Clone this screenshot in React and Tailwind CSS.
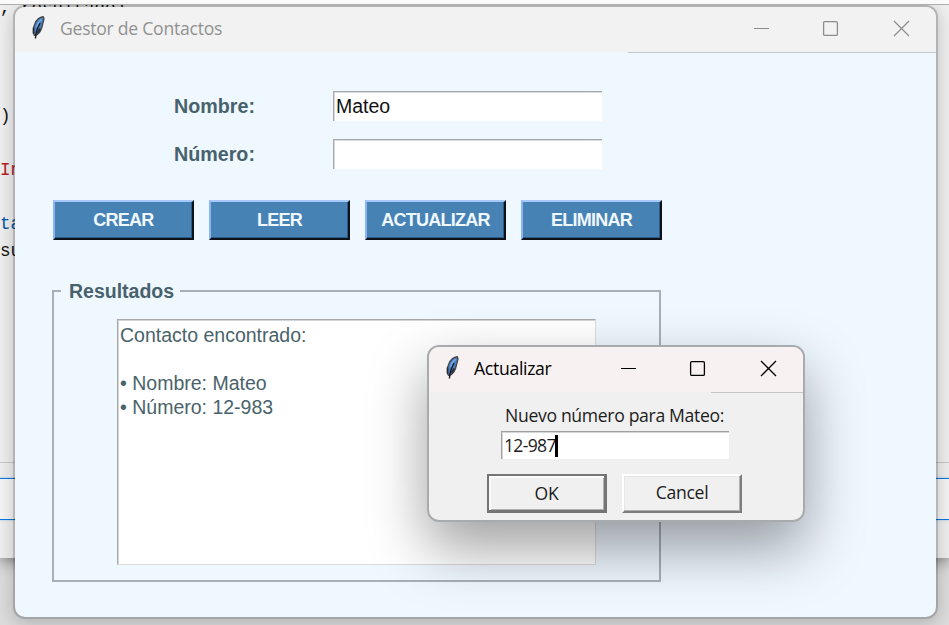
import React from "react";

const UI = "font-['Open_Sans','Noto_Sans',sans-serif]";

function Feather() {
  return (
    <svg width="16" height="26" viewBox="0 0 16 26" className="block shrink-0">
      <path
        d="M13.2 1.8C9.4 2.2 6.4 5.2 4.8 9C3.2 12 2.8 15 3.4 18C4 20 4.6 20.6 5.2 20.6C8 19.5 10.6 16.4 11.6 13C12.4 10.4 12.8 8.4 13.4 6.4C14 4.4 14 2.6 13.2 1.8Z"
        fill="#4a7fc0"
        stroke="#47484c"
        strokeWidth="1.4"
      />
      <path d="M11.6 4.2C8.8 6 7.4 9 6.6 12.4" fill="none" stroke="#6fa8ea" strokeWidth="1.8" />
      <path d="M10.2 8C8.4 11 5.8 16 5.4 23.5" fill="none" stroke="#15171c" strokeWidth="1.4" />
      <path d="M3.6 12.5L3.6 18.5M10.2 13.5L7.4 18" fill="none" stroke="#25292f" strokeWidth="1.5" />
    </svg>
  );
}

function WindowControls({ className }) {
  return (
    <svg
      width="160"
      height="18"
      viewBox="0 0 160 18"
      fill="none"
      stroke="currentColor"
      strokeWidth="1.3"
      className={`-mt-[3px] block shrink-0 ${className}`}
    >
      <path d="M1 9.5H16" strokeWidth="1" />
      <rect x="70.6" y="2.6" width="13.8" height="13.8" rx="1.2" />
      <path d="M141 2L156 17M156 2L141 17" />
    </svg>
  );
}

function Field({ label, value }) {
  return (
    <div className="flex h-[30px] items-center">
      <div className="w-[159px] text-[19.7px] font-bold leading-[30px] text-[#48626c]">{label}</div>
      <div className="h-[30px] w-[269px] border-l border-t border-[#a6a8ab] bg-white pl-[2px] text-[19.5px] leading-[29px] text-[#111] shadow-[inset_1px_1px_0_#d8d9da]">
        {value}
      </div>
    </div>
  );
}

function ActionButton({ children }) {
  return (
    <button className="h-[40px] w-[141px] border-2 border-b-[#0c1218] border-l-[#8ab4f4] border-r-[#0c1218] border-t-[#a6c8fa] bg-[#4682b4] text-[18px] font-bold leading-[35px] tracking-[-0.75px] text-[#f0f8ff] shadow-[inset_-1px_-1px_0_#2c5a82]">
      {children}
    </button>
  );
}

function CodeEditor() {
  return (
    <div className="flex h-[558px] flex-col bg-[#efefef] shadow-[0_3px_14px_rgba(0,0,0,0.45)]">
      <div className="z-10 h-[5px] shrink-0 border-b border-[#adadad] bg-[#fafafa]" />
      <pre className="-mt-[10px] h-[468px] shrink-0 whitespace-pre border-b border-[#c8c8c8] font-['Liberation_Mono',monospace] text-[17.5px] leading-[27px] text-[#111]">
        {", resultado)\n\n\n\n)\n\n"}
        <span className="text-[#b81c22]">In</span>
        {"\n\n"}
        <span className="text-[#0055a5]">ta</span>
        {"\nsu"}
      </pre>
      <div className="mt-[15px] h-[42px] shrink-0 border-y border-[#0a78e0] bg-[#f5f5f5] shadow-[0_0_2px_rgba(60,150,230,0.5)]" />
    </div>
  );
}

function MainWindow() {
  return (
    <div className="absolute left-[13px] top-[5px] h-[614px] w-[925px] overflow-hidden rounded-[12px] border-2 border-black/25 bg-[#eff7ff] bg-clip-padding font-['Liberation_Sans',Arial,sans-serif]">
      <div className={`flex h-[45px] items-center bg-[#f2f2f2] pl-[15px] ${UI}`}>
        <div className="-mt-[3px]">
          <Feather />
        </div>
        <div className="-mt-[3px] ml-[14px] flex-1 text-[17.6px] leading-[42px] tracking-[-0.26px] text-[#919191]">
          Gestor de Contactos
        </div>
        <WindowControls className="mr-[23px] text-[#8d8d8d]" />
      </div>
      <div className="ml-auto h-px w-[308px] bg-[#c3c7ce]" />
      <div className="flex flex-col pl-[38px] pt-[38px]">
        <div className="flex flex-col gap-[18px] pl-[121px]">
          <Field label="Nombre:" value="Mateo" />
          <Field label="Número:" value="" />
        </div>
        <div className="mt-[31px] flex gap-[15px]">
          <ActionButton>CREAR</ActionButton>
          <ActionButton>LEER</ActionButton>
          <ActionButton>ACTUALIZAR</ActionButton>
          <ActionButton>ELIMINAR</ActionButton>
        </div>
        <fieldset className="-ml-px mt-[39px] h-[303px] w-[609px] border-2 border-[#a8b0b6] pl-[7px]">
          <legend className="h-[24px] w-[119px] pl-[8px] text-[19.5px] font-bold leading-[24px] text-[#48626c]">
            Resultados
          </legend>
          <div className="ml-[56px] mt-[16px] h-[246px] w-[479px] whitespace-pre border border-b-[#dcdcdc] border-l-[#a6a8aa] border-r-[#dcdcdc] border-t-[#a6a8aa] bg-white pl-[2px] pt-[3px] text-[19.5px] leading-[24px] text-[#4a636a] shadow-[inset_1px_1px_0_#d4d5d6]">
            {"Contacto encontrado:\n\n• Nombre: Mateo\n• Número: 12-983"}
          </div>
        </fieldset>
      </div>
    </div>
  );
}

function Dialog() {
  return (
    <div
      className={`absolute left-[427px] top-[345px] h-[177px] w-[378px] overflow-hidden rounded-[12px] border-2 border-[#a8abad] bg-[#f0f0f0] text-black shadow-[0_26px_58px_rgba(0,0,0,0.38)] ${UI}`}
    >
      <div className="flex h-[45px] items-center bg-[#f8f1f1] pl-[15px]">
        <div className="-mt-[3px]">
          <Feather />
        </div>
        <div className="-mt-[3px] ml-[14px] flex-1 text-[17.6px] leading-[42px] tracking-[-0.3px]">Actualizar</div>
        <WindowControls className="mr-[23px] text-black" />
      </div>
      <div className="ml-auto h-px w-[92px] bg-[#c6c6c6]" />
      <div className="flex flex-col pl-[58px] text-[17.6px] text-[#1c1c1c]">
        <div className="mt-[10px] h-[27px] pl-[18px] leading-[25px] tracking-[-0.33px]">
          Nuevo número para Mateo:
        </div>
        <div className="ml-[14px] mt-px flex h-[28px] w-[228px] items-center border-l border-t border-[#a0a0a0] bg-white pl-[2px] shadow-[inset_1px_1px_0_#d6d6d6]">
          <span className="-mt-px leading-[24px] tracking-[-0.7px]">12-987</span>
          <span className="-ml-px h-[22px] w-[3px] bg-black" />
        </div>
        <div className="mt-[15px] flex gap-[15px]">
          <button className="h-[39px] w-[120px] border-2 border-b-[3px] border-r-[3px] border-[#757575] leading-[34px] tracking-[-0.3px] shadow-[inset_2px_2px_0_#fafafa,inset_-1px_-1px_0_#b0b0b0]">
            OK
          </button>
          <button className="h-[39px] w-[120px] border-2 border-b-[#7c7c7c] border-l-white border-r-[#7c7c7c] border-t-white pb-[2px] leading-[33px] tracking-[-0.3px] shadow-[inset_-1px_-1px_0_#b0b0b0,inset_1px_1px_0_#e6e6e6]">
            Cancel
          </button>
        </div>
      </div>
    </div>
  );
}

export default function App() {
  return (
    <div className="relative h-[625px] w-[949px] overflow-hidden bg-[#dcdcdc]">
      <CodeEditor />
      <div className="absolute left-[13px] top-[5px] h-[614px] w-[925px] rounded-[12px] shadow-[0_4px_18px_rgba(0,0,0,0.2)]" />
      <MainWindow />
      <Dialog />
    </div>
  );
}
